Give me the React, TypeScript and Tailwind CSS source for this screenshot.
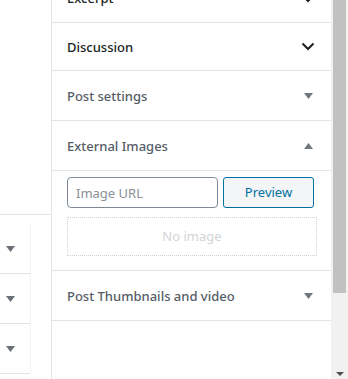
import React from 'react'

const font = { fontFamily: '"Noto Sans", "Open Sans", sans-serif' }

function Chevron() {
  return (
    <svg width="14" height="9" viewBox="0 0 14 9" className="text-[#1e1e1e]">
      <path d="M1.5 1.5 L7 7 L12.5 1.5" fill="none" stroke="currentColor" strokeWidth="2" />
    </svg>
  )
}

function Tri({ up = false, color = '#72777c' }: { up?: boolean; color?: string }) {
  return (
    <svg width="9" height="6" viewBox="0 0 9 6">
      {up ? <path d="M0 6 L4.5 0 L9 6 Z" fill={color} /> : <path d="M0 0 L9 0 L4.5 6 Z" fill={color} />}
    </svg>
  )
}

function Header({ title, h, dark = false, icon }: { title: string; h: string; dark?: boolean; icon: React.ReactNode }) {
  return (
    <div className={`flex items-center justify-between pl-[15px] pr-[16px] border-b border-[#e2e4e7] ${h}`}>
      <span className={`text-[13px] font-medium pt-[2px] ${dark ? 'text-[#191e23]' : 'text-[#555d66]'}`}>{title}</span>
      <span className="flex w-[14px] justify-center">{icon}</span>
    </div>
  )
}

export default function App() {
  return (
    <div className="flex w-[348px] h-[379px] overflow-hidden bg-white" style={font}>
      <div className="w-[51px] shrink-0">
        <div className="mt-[214px] border-t border-[#e2e4e7]" />
        <div className="mt-[9px] w-[31px] border-r border-[#f3f4f5]">
          {[0, 1, 2].map((i) => (
            <div key={i} className="flex h-[50px] items-center justify-start pl-[6px] border-b border-[#e2e4e7]">
              <Tri color="#6c7177" />
            </div>
          ))}
        </div>
      </div>

      <div className="w-[280px] shrink-0 border-l border-[#e2e4e7] h-full">
        <div className="-mt-[26px]">
          <Header title="Excerpt" h="h-[49px]" dark icon={<Chevron />} />
        </div>
        <Header title="Discussion" h="h-[48px]" dark icon={<Chevron />} />
        <Header title="Post settings" h="h-[50px]" icon={<Tri />} />
        <Header title="External Images" h="h-[50px]" icon={<Tri up />} />
        <div className="h-[100px] border-b border-[#e2e4e7] pl-[15px] pr-[14px] pt-[6px]">
          <div className="flex gap-[5px]">
            <input
              placeholder="Image URL"
              className="w-[151px] h-[31px] rounded-[4px] border border-[#7e8993] px-[8px] text-[13px] text-[#32373c] placeholder:text-[#8a9096] outline-none"
              style={font}
            />
            <button className="w-[91px] h-[31px] rounded-[3px] border border-[#0071a1] bg-[#f3f5f6] text-[13px] text-[#0071a1]">
              Preview
            </button>
          </div>
          <div className="mt-[9px] h-[39px] border border-dotted border-[#cfd1d4] flex items-center justify-center text-[13px] text-[#d3d5d8]">
            No image
          </div>
        </div>
        <Header title="Post Thumbnails and video" h="h-[50px]" icon={<Tri />} />
      </div>

      <div className="w-[17px] shrink-0 bg-[#f1f1f1] flex flex-col items-center">
        <div className="w-[13px] h-[293px] bg-[#c1c1c1]" />
        <div className="flex-1" />
        <div className="mb-[3px]">
          <svg width="8" height="4" viewBox="0 0 8 4">
            <path d="M0 0 L8 0 L4 4 Z" fill="#505050" />
          </svg>
        </div>
      </div>
    </div>
  )
}
